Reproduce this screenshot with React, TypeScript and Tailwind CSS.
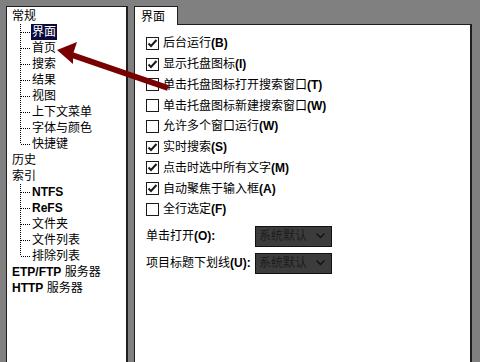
import React from 'react';

interface TreeNode { label: React.ReactNode; level: 0 | 1; last?: boolean; selected?: boolean; }

const B = ({ children }: { children: React.ReactNode }) => (
  <span className="font-bold font-['Liberation_Sans',sans-serif]">{children}</span>
);

const TREE: TreeNode[] = [
  { label: '常规', level: 0 },
  { label: '界面', level: 1, selected: true },
  { label: '首页', level: 1 },
  { label: '搜索', level: 1 },
  { label: '结果', level: 1 },
  { label: '视图', level: 1 },
  { label: '上下文菜单', level: 1 },
  { label: '字体与颜色', level: 1 },
  { label: '快捷键', level: 1, last: true },
  { label: '历史', level: 0 },
  { label: '索引', level: 0 },
  { label: <B>NTFS</B>, level: 1 },
  { label: <B>ReFS</B>, level: 1 },
  { label: '文件夹', level: 1 },
  { label: '文件列表', level: 1 },
  { label: '排除列表', level: 1, last: true },
  { label: <><B>ETP/FTP</B> 服务器</>, level: 0 },
  { label: <><B>HTTP</B> 服务器</>, level: 0 },
];

const CHECKS: Array<{ text: string; key: string; on: boolean }> = [
  { text: '后台运行', key: '(B)', on: true },
  { text: '显示托盘图标', key: '(I)', on: true },
  { text: '单击托盘图标打开搜索窗口', key: '(T)', on: false },
  { text: '单击托盘图标新建搜索窗口', key: '(W)', on: false },
  { text: '允许多个窗口运行', key: '(W)', on: false },
  { text: '实时搜索', key: '(S)', on: true },
  { text: '点击时选中所有文字', key: '(M)', on: true },
  { text: '自动聚焦于输入框', key: '(A)', on: true },
  { text: '全行选定', key: '(F)', on: false },
];

const TreeLines = ({ last }: { last?: boolean }) => (
  <svg width="24" height="16" className="shrink-0">
    <line x1="13.5" y1="0" x2="13.5" y2={last ? 8 : 16} stroke="#000" strokeDasharray="1 1" />
    <line x1="14" y1="8.5" x2="24" y2="8.5" stroke="#000" strokeDasharray="1 1" />
  </svg>
);

const Checkbox = ({ on }: { on: boolean }) => (
  <svg width="13" height="13" className="shrink-0">
    <rect x="0.5" y="0.5" width="12" height="12" fill="#fff" stroke="#1a1a1a" />
    {on && <path d="M2.5 6.5 L5 9 L10.5 3" fill="none" stroke="#1a1a1a" strokeWidth="2" />}
  </svg>
);

const Select = () => (
  <div className="w-[77px] h-[21px] bg-[#3c3c3c] border border-[#111] flex items-center pl-[3px] pr-[6px] text-[#1c1c1c]">
    <span className="flex-1">系统默认</span>
    <svg width="9" height="6">
      <path d="M0.5 0.5 L4.5 4.5 L8.5 0.5" fill="none" stroke="#111" strokeWidth="1.3" />
    </svg>
  </div>
);

export default function App() {
  return (
    <div className="relative w-[480px] h-[362px] overflow-hidden bg-[#808080] flex gap-[6px] pt-[6px] pl-[6px] text-[12px] leading-4 text-black font-['Liberation_Sans','Noto_Sans_CJK_SC',sans-serif]">
      {/* Tree */}
      <div className="w-[122px] h-[380px] bg-white border-l border-t border-r-2 border-[#1e1e1e] pt-[1px]">
        {TREE.map((n, i) => (
          <div key={i} className="flex h-4 items-center">
            {n.level === 0 ? (
              <span className="pl-[5px] whitespace-nowrap">{n.label}</span>
            ) : (
              <>
                <TreeLines last={n.last} />
                <span className={`px-[1px] whitespace-nowrap ${n.selected ? 'bg-[#0b0b3b] text-white' : ''}`}>{n.label}</span>
              </>
            )}
          </div>
        ))}
      </div>

      {/* Tabs + page */}
      <div className="w-[338px] flex flex-col">
        <div className="flex h-[20px]">
          <div className="w-[44px] bg-white border-l border-t border-r border-[#1e1e1e] pl-[6px] pt-[2px]">界面</div>
          <div className="flex-1 border-b border-[#1e1e1e]" />
        </div>
        <div className="h-[360px] bg-white border-l border-r-2 border-[#1e1e1e] pl-[11px] pt-[8px]">
          {CHECKS.map((c, i) => (
            <div key={i} className="h-[20.75px] flex items-center gap-[4px]">
              <Checkbox on={c.on} />
              <span className="whitespace-nowrap">{c.text}<B>{c.key}</B></span>
            </div>
          ))}
          <div className="mt-[6px] flex flex-col gap-[6px]">
            <div className="flex items-center">
              <span className="w-[109px] whitespace-nowrap">单击打开<B>(O):</B></span>
              <Select />
            </div>
            <div className="flex items-center">
              <span className="w-[109px] whitespace-nowrap">项目标题下划线<B>(U):</B></span>
              <Select />
            </div>
          </div>
        </div>
      </div>

      {/* Annotation arrow */}
      <svg className="absolute left-0 top-0 pointer-events-none" width="480" height="362">
        <line x1="72" y1="55" x2="168" y2="88" stroke="#780000" strokeWidth="6" />
        <polygon points="57,50 77,42 73,54 73,64" fill="#780000" />
      </svg>
    </div>
  );
}
